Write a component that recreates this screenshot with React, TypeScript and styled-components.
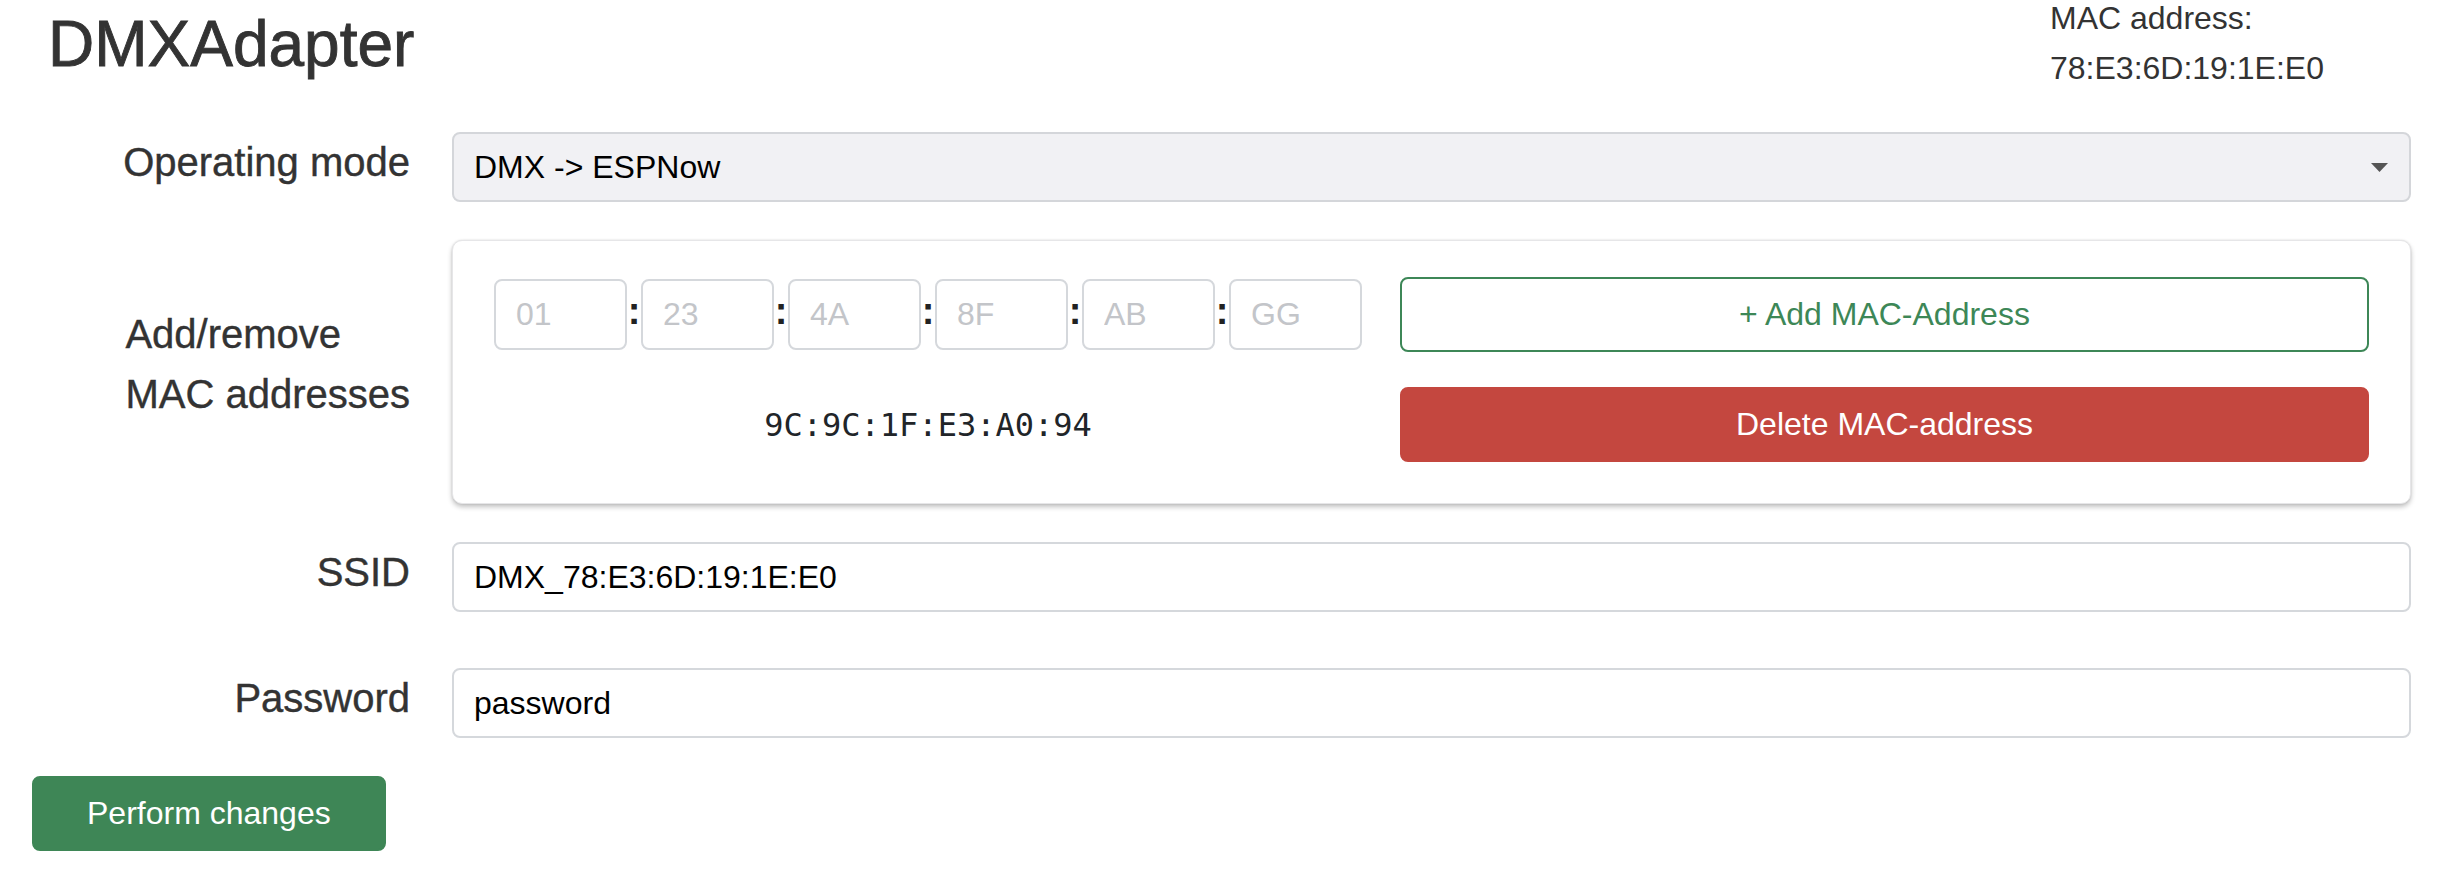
import React from "react";
import styled, { createGlobalStyle, css } from "styled-components";

const GlobalStyle = createGlobalStyle`
  html, body {
    margin: 0;
    padding: 0;
    background: #ffffff;
  }

  body {
    font-family: "Liberation Sans", Arial, sans-serif;
    color: #212529;
  }

  *, *::before, *::after {
    box-sizing: border-box;
  }
`;

const Page = styled.div`
  width: 2458px;
  height: 896px;
  padding: 0 47px 0 32px;
  overflow: hidden;
`;

const Header = styled.header`
  display: grid;
  grid-template-columns: 1fr 361px;
  align-items: start;
  height: 132px;
`;

// the source font is a medium weight, Liberation only has 400/700
const Title = styled.h2`
  margin: 6px 0 0 16px;
  font-size: 64px;
  line-height: 1.2;
  font-weight: 500;
  color: #333333;
  -webkit-text-stroke: 0.9px #333333;
`;

const DeviceInfo = styled.div`
  margin-top: -7px;
  font-size: 32px;
  line-height: 50px;
  color: #333333;
`;

interface FormRowProps {
  readonly $spacing?: number;
}

const FormRow = styled.div<FormRowProps>`
  display: grid;
  grid-template-columns: 378px 1fr;
  column-gap: 42px;
  margin-top: ${(props) => props.$spacing ?? 38}px;

  &:first-child {
    margin-top: 0;
  }
`;

interface FormLabelProps {
  readonly $centered?: boolean;
}

const FormLabel = styled.label<FormLabelProps>`
  font-size: 40px;
  line-height: 60px;
  color: #333333;
  text-align: right;
  -webkit-text-stroke: 0.4px #333333;

  ${(props) =>
    props.$centered &&
    css`
      justify-self: end;
      align-self: center;
      text-align: left;
      margin-bottom: 16px;
    `}
`;

const Select = styled.div`
  display: flex;
  align-items: center;
  justify-content: space-between;
  height: 70px;
  padding: 0 21px 0 20px;
  background: #f1f1f4;
  border: 2px solid #d4d6da;
  border-radius: 8px;
  font-size: 32px;
  color: #000000;
`;

const TextInput = styled.input`
  display: block;
  width: 100%;
  height: 70px;
  padding: 0 20px;
  border: 2px solid #d5d8dc;
  border-radius: 8px;
  background: #ffffff;
  font: inherit;
  font-size: 32px;
  color: #000000;
  outline: none;
`;

const Card = styled.div`
  display: grid;
  grid-template-columns: auto 1fr;
  column-gap: 38px;
  row-gap: 35px;
  align-items: center;
  padding: 36px 41px 41px 41px;
  background: #ffffff;
  border: 1px solid #e6e6e8;
  border-radius: 10px;
  box-shadow: 0 3px 5px rgba(0, 0, 0, 0.24), 0 0 2px rgba(0, 0, 0, 0.12);
`;

const ByteGroup = styled.div`
  display: flex;
  align-items: center;
`;

const ByteInput = styled.input`
  width: 133px;
  height: 71px;
  padding: 0 20px;
  border: 2px solid #d5d8dc;
  border-radius: 8px;
  background: #ffffff;
  font: inherit;
  font-size: 32px;
  color: #000000;
  outline: none;

  &::placeholder {
    color: #c3c5c9;
  }
`;

const ByteSeparator = styled.span`
  width: 14px;
  padding-bottom: 8px;
  text-align: center;
  font-size: 38px;
  font-weight: bold;
  color: #222222;
  line-height: 1;
`;

const MacAddress = styled.div`
  text-align: center;
  font-family: "DejaVu Sans Mono", "Liberation Mono", monospace;
  font-size: 32px;
  line-height: 48px;
  color: #212529;
`;

interface ButtonProps {
  readonly $variant: "outline" | "danger" | "success";
  readonly $block?: boolean;
}

const Button = styled.button<ButtonProps>`
  display: block;
  height: 75px;
  padding: 0 53px;
  border: 2px solid transparent;
  border-radius: 8px;
  font: inherit;
  font-size: 32px;
  cursor: pointer;
  width: ${(props) => (props.$block ? "100%" : "auto")};

  ${(props) =>
    props.$variant === "outline"
      ? css`
          background: #ffffff;
          border-color: #3d8757;
          color: #3d8757;
        `
      : props.$variant === "danger"
      ? css`
          background: #c4473f;
          border-color: #c4473f;
          color: #ffffff;
        `
      : css`
          background: #3e8656;
          border-color: #3e8656;
          color: #ffffff;
        `}
`;

const Actions = styled.div`
  margin-top: 38px;
`;

const CaretDown = () => (
  <svg width="17" height="9" viewBox="0 0 17 9" aria-hidden="true">
    <polygon points="0,0 17,0 8.5,9" fill="#555555" />
  </svg>
);

const bytes = ["01", "23", "4A", "8F", "AB", "GG"];

export default function App() {
  return (
    <Page>
      <GlobalStyle />
      <Header>
        <Title>DMXAdapter</Title>
        <DeviceInfo>
          MAC address:
          <br />
          78:E3:6D:19:1E:E0
        </DeviceInfo>
      </Header>

      <form onSubmit={(e) => e.preventDefault()}>
        <FormRow>
          <FormLabel>Operating mode</FormLabel>
          <Select role="combobox" aria-label="Operating mode">
            <span>DMX -&gt; ESPNow</span>
            <CaretDown />
          </Select>
        </FormRow>

        <FormRow>
          <FormLabel $centered>
            Add/remove
            <br />
            MAC addresses
          </FormLabel>
          <Card>
            <ByteGroup>
              {bytes.map((b, i) => (
                <React.Fragment key={b}>
                  {i > 0 && <ByteSeparator>:</ByteSeparator>}
                  <ByteInput placeholder={b} maxLength={2} />
                </React.Fragment>
              ))}
            </ByteGroup>
            <Button type="button" $variant="outline" $block>
              + Add MAC-Address
            </Button>
            <MacAddress>9C:9C:1F:E3:A0:94</MacAddress>
            <Button type="button" $variant="danger" $block>
              Delete MAC-address
            </Button>
          </Card>
        </FormRow>

        <FormRow>
          <FormLabel htmlFor="ssid">SSID</FormLabel>
          <TextInput id="ssid" defaultValue="DMX_78:E3:6D:19:1E:E0" />
        </FormRow>

        <FormRow $spacing={56}>
          <FormLabel htmlFor="password">Password</FormLabel>
          <TextInput id="password" defaultValue="password" />
        </FormRow>

        <Actions>
          <Button type="submit" $variant="success">
            Perform changes
          </Button>
        </Actions>
      </form>
    </Page>
  );
}
